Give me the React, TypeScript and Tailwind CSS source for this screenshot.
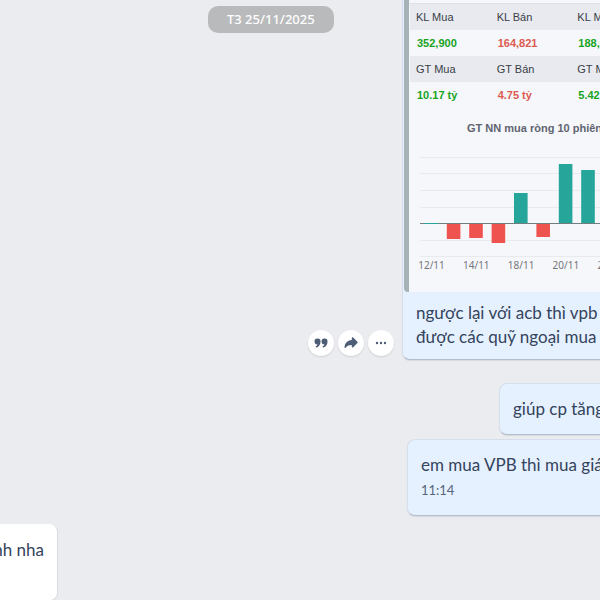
import React from 'react';

interface DayFlow {
  label: string;
  top: number;
  height: number;
  positive: boolean;
}

// one bar per session, y measured from the top of the chart
const days: DayFlow[] = [
  { label: '12/11', top: 74, height: 1, positive: true },
  { label: '', top: 75, height: 15, positive: false },
  { label: '14/11', top: 75, height: 14, positive: false },
  { label: '', top: 75, height: 19, positive: false },
  { label: '18/11', top: 44, height: 30, positive: true },
  { label: '', top: 75, height: 13, positive: false },
  { label: '20/11', top: 15, height: 59, positive: true },
  { label: '', top: 21, height: 53, positive: true },
  { label: '22/11', top: 50, height: 24, positive: true },
];

const gridLines = [8, 24, 41, 58, 91, 107];

const FlowChart: React.FC = () => (
  <svg width="190" height="126" className="block overflow-visible" role="img" aria-label="GT NN mua ròng 10 phiên">
    {gridLines.map((y) => (
      <rect key={y} x="10" y={y} width="200" height="1" fill="#e9eaed" />
    ))}
    <rect x="10" y="74" width="200" height="1" fill="#717e80" />
    {days.map((day, i) => (
      <g key={i}>
        <rect
          x={14.4 + i * 22.4}
          y={day.top}
          width="13.6"
          height={day.height}
          fill={day.positive ? '#26a69a' : '#ef5350'}
        />
        <text
          x={21.5 + i * 22.4}
          y="120"
          textAnchor="middle"
          className="fill-[#747579] font-['Noto_Sans',sans-serif] text-[10px]"
        >
          {day.label}
        </text>
      </g>
    ))}
  </svg>
);

const TradeTable: React.FC = () => (
  <table className="w-[242px] table-fixed text-left text-[11px] leading-[26px]">
    <tbody>
      <tr className="bg-[#e8eaf0] text-[#3a3d46]">
        <th className="pl-[6px] font-normal">KL Mua</th>
        <th className="pl-[6px] font-normal">KL Bán</th>
        <th className="pl-[6px] font-normal">KL Mua</th>
      </tr>
      <tr className="font-bold">
        <td className="pl-[7px] text-[#18a31f]">352,900</td>
        <td className="pl-[7px] text-[#dc5a50]">164,821</td>
        <td className="pl-[7px] text-[#18a31f]">188,079</td>
      </tr>
      <tr className="bg-[#e8eaf0] text-[#3a3d46]">
        <th className="pl-[6px] font-normal">GT Mua</th>
        <th className="pl-[6px] font-normal">GT Bán</th>
        <th className="pl-[6px] font-normal">GT Mua</th>
      </tr>
      <tr className="font-bold">
        <td className="pl-[7px] text-[#18a31f]">10.17 tỷ</td>
        <td className="pl-[7px] text-[#dc5a50]">4.75 tỷ</td>
        <td className="pl-[7px] text-[#18a31f]">5.42 tỷ</td>
      </tr>
    </tbody>
  </table>
);

const ActionButton: React.FC<{ label: string; children: React.ReactNode }> = ({ label, children }) => (
  <button
    type="button"
    aria-label={label}
    className="flex size-[26px] items-center justify-center rounded-full bg-white text-[#4d5d75] shadow-[0_1px_2px_rgba(0,0,0,0.12)]"
  >
    {children}
  </button>
);

const MessageActions: React.FC = () => (
  <div className="mb-1 flex shrink-0 gap-1">
    <ActionButton label="Trả lời">
      <svg width="14" height="12" viewBox="0 0 14 12" fill="currentColor">
        <path d="M3.4 1.5a3 3 0 0 1 3.1 3.2c0 2.8-1.5 4.9-4 5.8-.7.2-1.2-.7-.6-1.2.9-.6 1.4-1.1 1.6-1.9A3 3 0 0 1 .5 4.5a2.9 2.9 0 0 1 2.9-3z" />
        <path d="M10.4 1.5a3 3 0 0 1 3.1 3.2c0 2.8-1.5 4.9-4 5.8-.7.2-1.2-.7-.6-1.2.9-.6 1.4-1.1 1.6-1.9a3 3 0 0 1-3-2.9 2.9 2.9 0 0 1 2.9-3z" />
      </svg>
    </ActionButton>
    <ActionButton label="Chia sẻ">
      <svg width="14" height="12" viewBox="0 0 14 12" fill="currentColor">
        <path d="M7.8 1.2c0-.8.8-1.1 1.4-.6l4.2 4.2c.4.4.4.9 0 1.3L9.2 10.3c-.6.5-1.4.2-1.4-.6V8C5 8 3.2 8.7 1.6 10.7c-.5.6-1.2.3-1.1-.5C.9 6.3 3.2 3.5 7.8 3.1z" />
      </svg>
    </ActionButton>
    <ActionButton label="Thêm">
      <svg width="12" height="4" viewBox="0 0 12 4" fill="currentColor">
        <circle cx="2" cy="2" r="1.2" />
        <circle cx="6" cy="2" r="1.2" />
        <circle cx="10" cy="2" r="1.2" />
      </svg>
    </ActionButton>
  </div>
);

const Bubble: React.FC<{ className: string; children: React.ReactNode }> = ({ className, children }) => (
  <div
    className={`-mr-4 min-w-0 flex-1 overflow-hidden rounded-lg border border-[#d5dfec] border-b-[#b3bdcd] bg-[#e5f1ff] whitespace-nowrap shadow-[0_1px_1px_rgba(0,0,0,0.08)] ${className}`}
  >
    {children}
  </div>
);

export default function App() {
  return (
    <main className="relative min-h-screen overflow-hidden bg-[#ebecef] font-[Lato,sans-serif] text-[17px] leading-6 text-[#34435c]">
      <div className="absolute top-[6px] left-[208px] rounded-[10px] bg-[#b9babc] px-[19px] font-['Noto_Sans',sans-serif] text-[13px] leading-[27px] font-medium text-white">
        T3 25/11/2025
      </div>

      <div className="flex items-end gap-2 pl-[308px]">
        <MessageActions />
        <Bubble className="rounded-t-none border-t-0">
          <div className="ml-px rounded-bl border-l-[5px] border-[#a5b3b7] bg-[#f6f7fb] font-['Liberation_Sans',sans-serif]">
            <div className="h-[4px] border-b border-[#dfe1e6]" />
            <div className="pl-px">
              <TradeTable />
              <h2 className="mt-3 pl-[57px] text-[11px] leading-[16px] font-bold text-[#5f6470]">
                GT NN mua ròng 10 phiên
              </h2>
              <div className="pt-[13px] pb-[17px]">
                <FlowChart />
              </div>
            </div>
          </div>
          <p className="pt-[9px] pb-[10px] pl-[13px]">
            ngược lại với acb thì vpb
            <br />
            được các quỹ ngoại mua
          </p>
        </Bubble>
      </div>

      <div className="mt-[23px] flex pl-[499px]">
        <Bubble className="px-[13px] py-[13px]">
          <p>giúp cp tăng</p>
        </Bubble>
      </div>

      <div className="mt-1 flex pl-[407px]">
        <Bubble className="px-[13px] pt-[13px] pb-[12px]">
          <p>em mua VPB thì mua giá</p>
          <time className="block text-[13px] leading-[26px] text-[#56657c]">11:14</time>
        </Bubble>
      </div>

      <div className="mt-2 flex">
        <div className="flex h-[77px] w-[58px] justify-end overflow-hidden rounded-r-lg border-r border-b border-[#d9dbe0] bg-white px-[13px] py-[14px] whitespace-nowrap">
          <p>nh nha</p>
        </div>
      </div>
    </main>
  );
}
